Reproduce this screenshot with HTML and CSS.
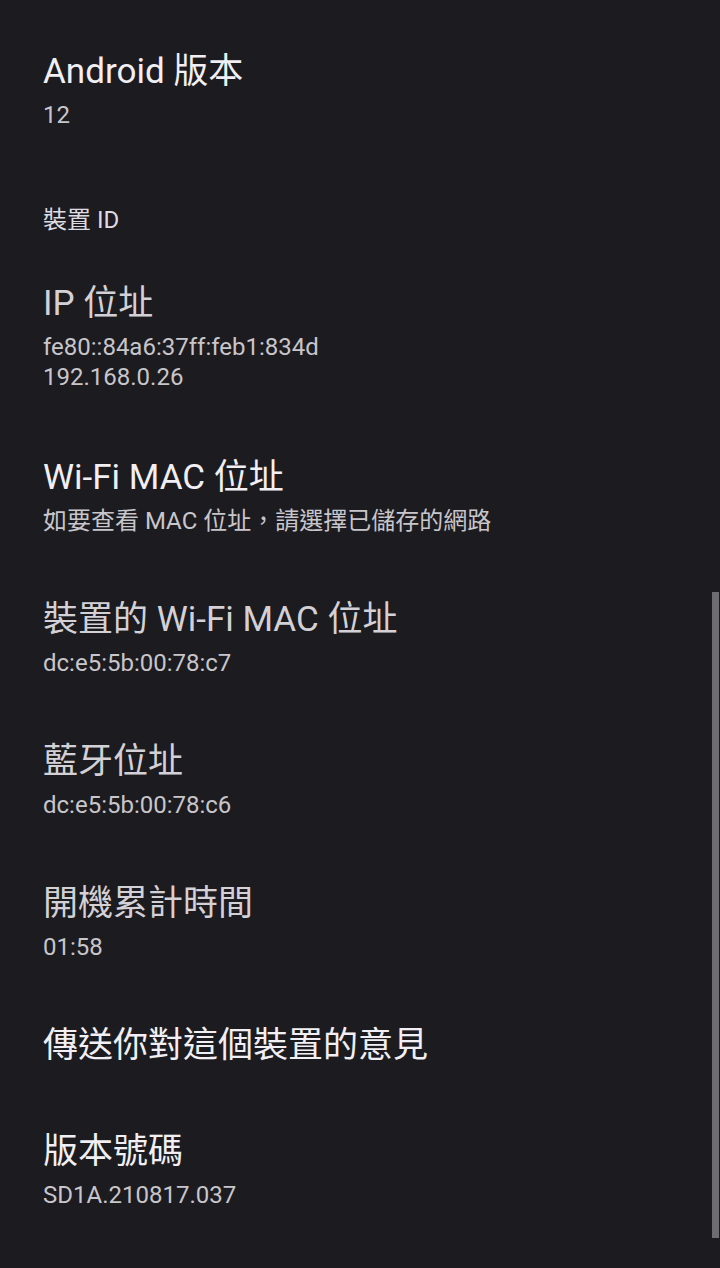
FILE: index.html
```html
<!DOCTYPE html>
<html lang="zh-Hant">
<head>
    <meta charset="UTF-8">
    <meta name="viewport" content="width=device-width, initial-scale=1.0">
    <title>關於手機</title>
    <link rel="stylesheet" href="styles.css">
</head>
<body>
<div class="screen">
    <div class="pref">
        <div class="pref-title">Android 版本</div>
        <div class="pref-summary">12</div>
    </div>

    <div class="pref-plain">裝置 ID</div>

    <div class="pref pref-tall">
        <div class="pref-title dim">IP 位址</div>
        <div class="pref-summary">fe80::84a6:37ff:feb1:834d<br>192.168.0.26</div>
    </div>

    <div class="pref">
        <div class="pref-title">Wi-Fi MAC 位址</div>
        <div class="pref-summary">如要查看 MAC 位址，請選擇已儲存的網路</div>
    </div>

    <div class="pref">
        <div class="pref-title dim">裝置的 Wi-Fi MAC 位址</div>
        <div class="pref-summary">dc:e5:5b:00:78:c7</div>
    </div>

    <div class="pref">
        <div class="pref-title dim">藍牙位址</div>
        <div class="pref-summary">dc:e5:5b:00:78:c6</div>
    </div>

    <div class="pref">
        <div class="pref-title dim">開機累計時間</div>
        <div class="pref-summary">01:58</div>
    </div>

    <div class="pref">
        <div class="pref-title">傳送你對這個裝置的意見</div>
    </div>

    <div class="pref">
        <div class="pref-title">版本號碼</div>
        <div class="pref-summary">SD1A.210817.037</div>
    </div>

    <div class="scrollbar"></div>
</div>
</body>
</html>
```

FILE: styles.css
```css
html, body {
    margin: 0;
    padding: 0;
    background-color: #1c1b1f;
}

body {
    font-family: Roboto, "Noto Sans CJK TC", sans-serif;
    color: #f1eff4;
    overflow: hidden;
}

.screen {
    position: relative;
    width: 720px;
    height: 1268px;
    padding-top: 19px;
    box-sizing: border-box;
}

.pref {
    padding: 31px 43px;
}

.pref-tall {
    padding-bottom: 33px;
}

.pref-title {
    font-size: 35px;
    line-height: 44px;
    color: #f1eff4;
    white-space: nowrap;
}

.pref-title.dim {
    color: #d3d1d6;
}

.pref-summary {
    margin-top: 6px;
    font-size: 24px;
    line-height: 30px;
    color: #c8c6cb;
}

.pref-plain {
    padding: 44px 43px 16px;
    font-size: 24px;
    line-height: 30px;
    color: #dedbe3;
}

/* полоса прокрутки поверх списка */
.scrollbar {
    position: absolute;
    top: 592px;
    right: 1px;
    width: 7px;
    height: 646px;
    background-color: #6e6d72;
}
```
